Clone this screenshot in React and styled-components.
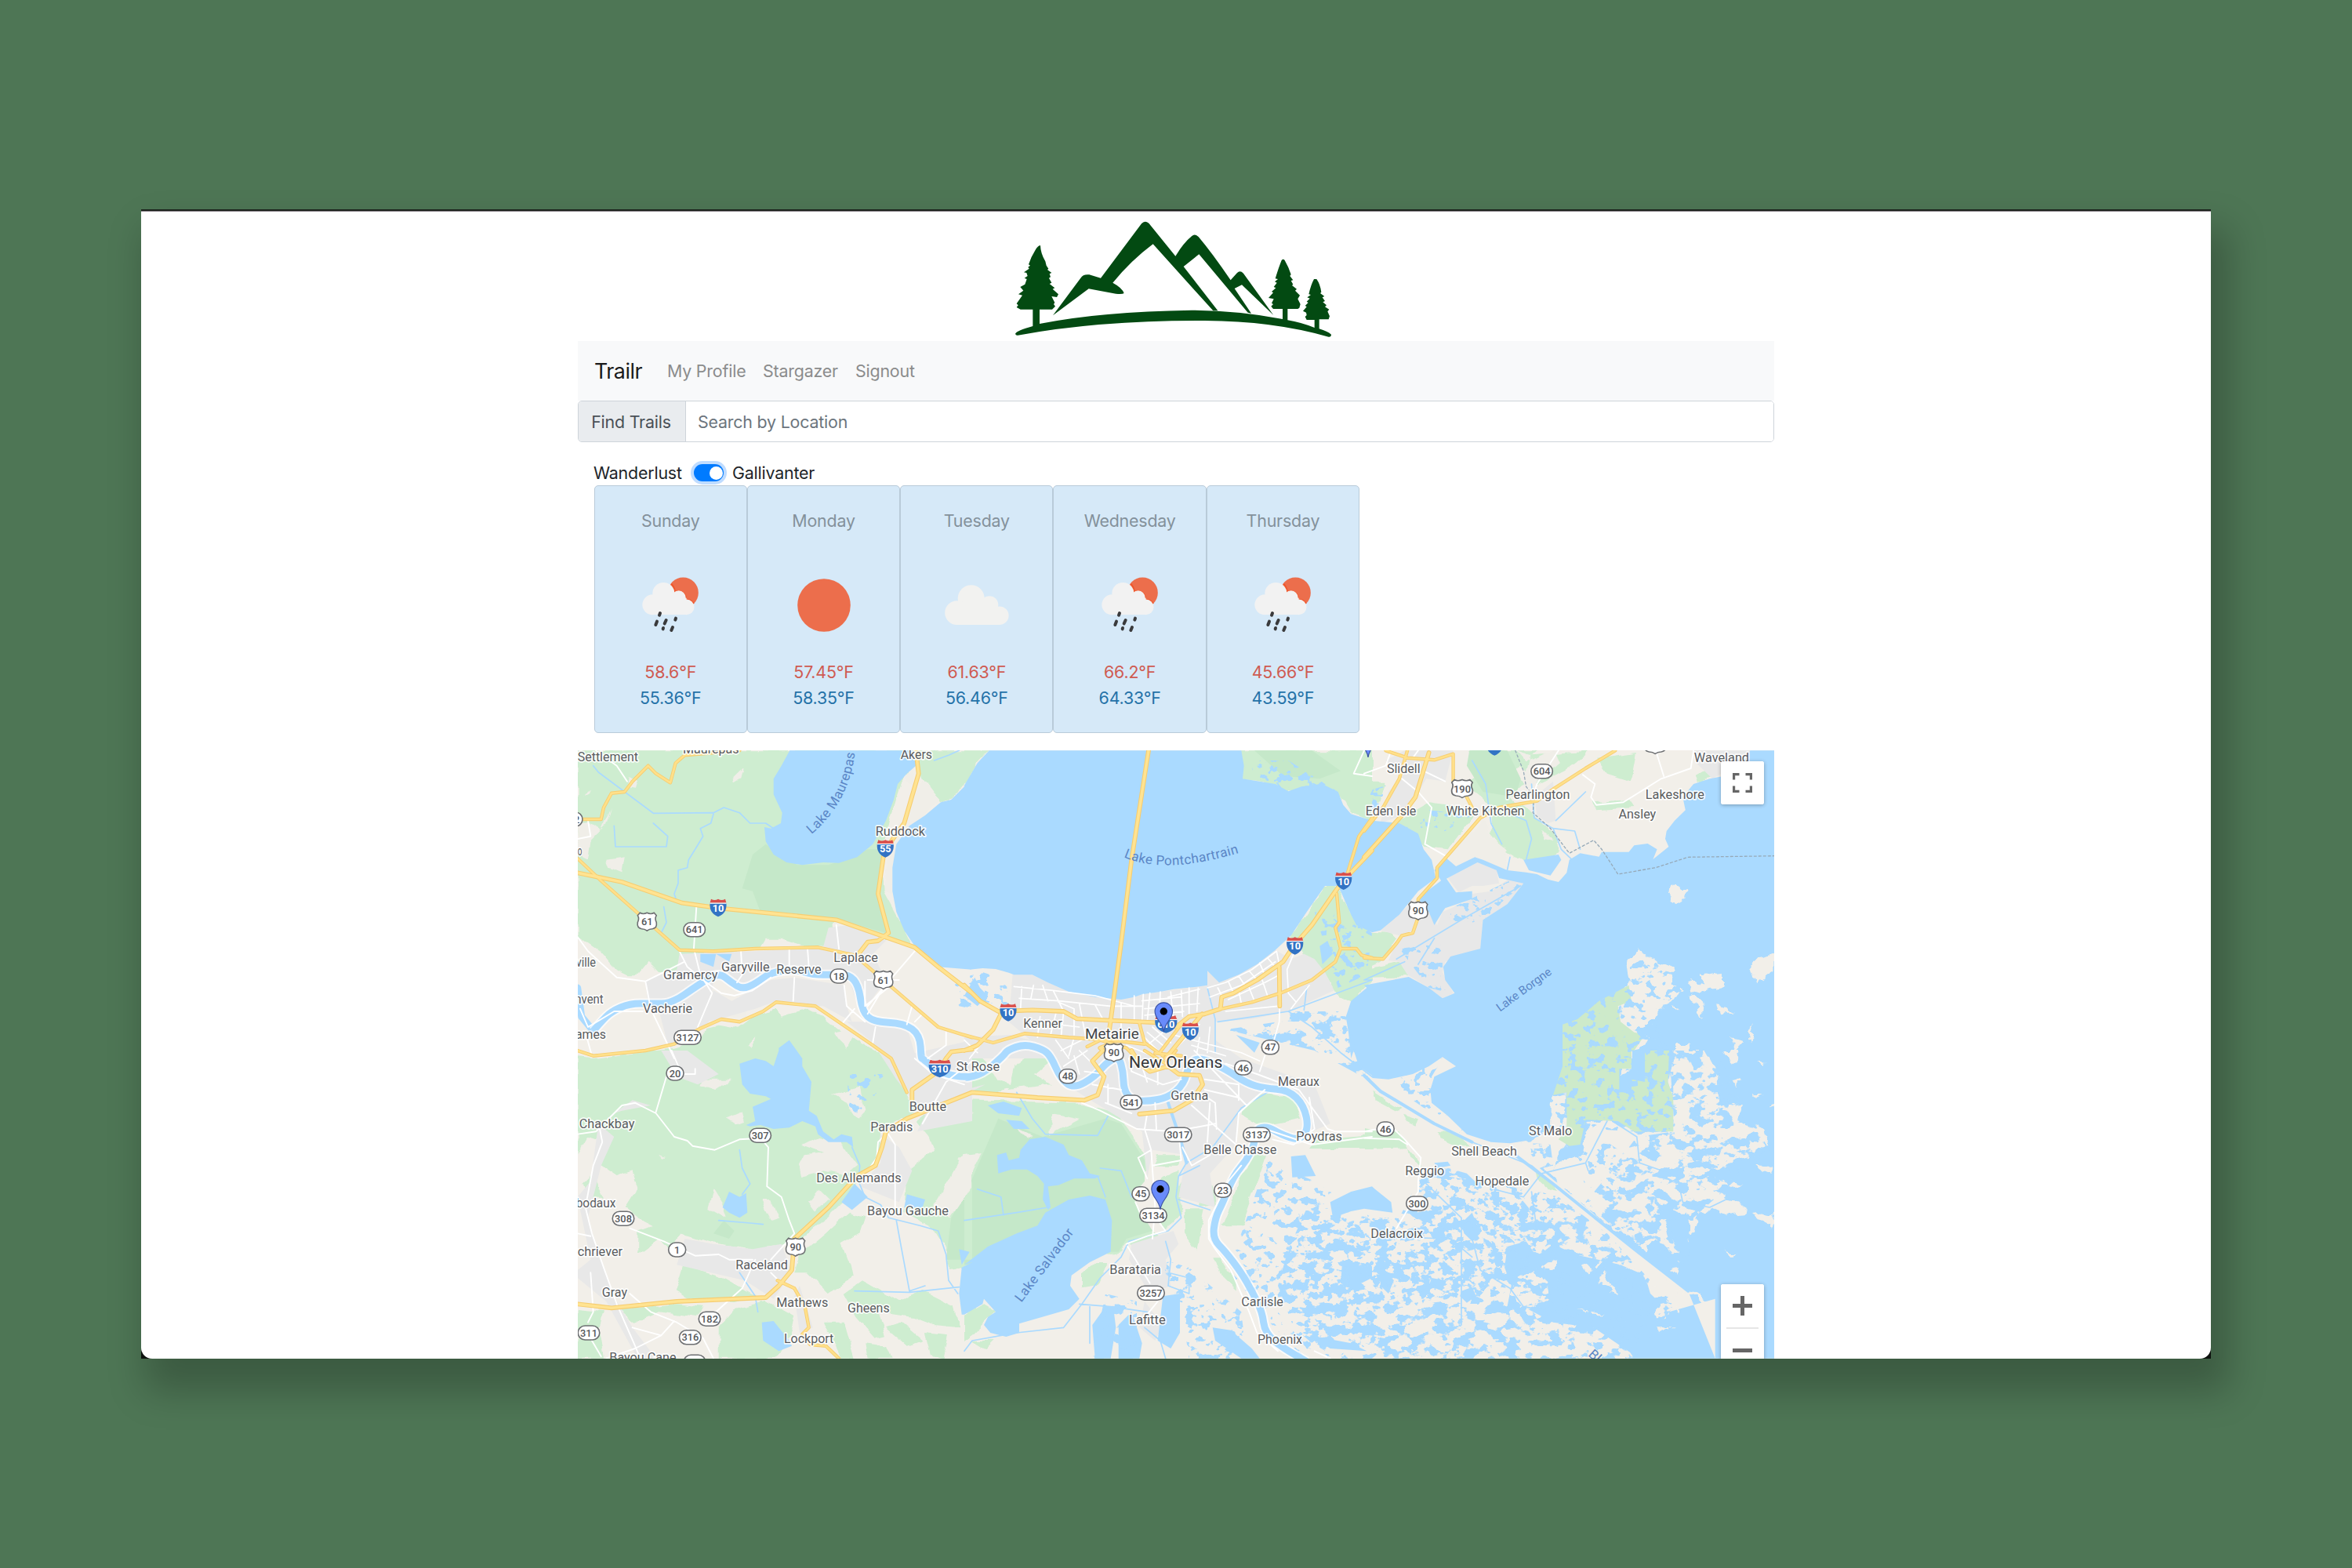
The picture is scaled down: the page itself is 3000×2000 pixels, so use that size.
import React from "react";
import styled, { createGlobalStyle } from "styled-components";

const GlobalStyle = createGlobalStyle`
  * { box-sizing: border-box; }
  body { margin: 0; background: #4e7655; font-family: Inter, "Liberation Sans", sans-serif; }
  button, input { font: inherit; letter-spacing: inherit; }
`;

/* ---------- page shell ---------- */

const Stage = styled.main`
  height: 2000px;
  padding: 267px 180px;
  background: #4e7655;
  overflow: hidden;
`;

const Shot = styled.div`
  height: 1466px;
  background: #0d120e;
  border-top: 2px solid #1c221d;
  box-shadow: 14px 33px 45px 9px rgba(0, 0, 0, 0.23);
`;

const Page = styled.div`
  height: 1464px;
  border-top: 1px solid #8d858d;
  border-radius: 0 0 14px 14px;
  background: #fff;
  overflow: hidden;
  font-size: 21.4px;
  line-height: 32px;
  letter-spacing: -0.2px;
  color: #212529;
`;

const Container = styled.div`
  width: 1526px;
  margin: 0 auto;
  display: flex;
  flex-direction: column;
`;

const LogoRow = styled.header`
  height: 165px;
  display: flex;
  justify-content: center;
`;

const LogoArt = styled.svg`
  width: 450px;
  height: 165px;
  margin-right: 10px;
  fill: #034a12;
`;

const Navbar = styled.nav`
  display: flex;
  align-items: center;
  height: 76px;
  padding: 0 21px;
  background: #f8f9fa;
`;

const Brand = styled.a`
  width: 93px;
  font-size: 26.8px;
  letter-spacing: -0.5px;
  color: #1b1b1b;
`;

const NavLink = styled.a`
  width: ${(p) => p.$w}px;
  white-space: nowrap;
  color: #8b8c8c;
`;

const SearchGroup = styled.div`
  display: flex;
  height: 53px;
  border: 1.4px solid #ced4da;
  border-radius: 5px;
  overflow: hidden;
`;

const SearchButton = styled.button`
  width: 137px;
  border: 0;
  border-right: 1.4px solid #ced4da;
  padding: 0 2px 0 0;
  background: #e9ecef;
  color: #495057;
`;

const SearchInput = styled.input`
  flex: 1;
  border: 0;
  padding: 0 15px;
  outline: 0;
  &::placeholder { color: #6c757d; opacity: 1; }
`;

const Modes = styled.div`
  display: flex;
  align-items: center;
  height: 32px;
  margin: 23px 0 0 20px;
`;

const ModeName = styled.span`
  width: ${(p) => p.$w}px;
`;

const Switch = styled.span`
  display: flex;
  justify-content: flex-end;
  align-items: center;
  width: 38px;
  height: 22px;
  margin: 0 11px 0 0;
  padding: 0 1.5px;
  border-radius: 11px;
  background: #007bff;
  box-shadow: 0 0 0 4px #bfdcff;
`;

const Knob = styled.span`
  width: 17px;
  height: 17px;
  border-radius: 50%;
  background: #fff;
`;

/* ---------- forecast ---------- */

const Forecast = styled.section`
  display: flex;
  margin: 0 0 22px 20.6px;
  height: 316px;
`;

const DayCard = styled.article`
  display: flex;
  flex-direction: column;
  align-items: center;
  width: 195.3px;
  padding-top: 28px;
  border: 1.6px solid #b9cbd9;
  border-radius: 5px;
  background: #d6e9f8;
`;

const DayName = styled.h2`
  margin: 0;
  font-size: inherit;
  font-weight: 400;
  color: #84919b;
`;

const IconBox = styled.div`
  display: flex;
  align-items: center;
  justify-content: center;
  height: 161px;
  padding-top: 22px;
`;

const Temp = styled.span`
  line-height: 33px;
  color: ${(p) => (p.$high ? "#cf5b52" : "#2472a8")};
`;

const RainIcon = () => (
  <svg width="80" height="76.7" viewBox="303 401 240 230">
    <circle cx="472" cy="470" r="58.5" fill="#ec6e4c" />
    <path d="M427 436a52 52 0 0 1 14 30a30 30 0 0 1 42 30a34 34 0 0 1 30 16" fill="none" stroke="#f0562a" strokeWidth="5" />
    <g fill="#f2f2f2">
      <circle cx="397" cy="473" r="42" />
      <circle cx="355" cy="516" r="39" />
      <circle cx="455" cy="489" r="27" />
      <circle cx="485" cy="525" r="29.5" />
      <rect x="355" y="490" width="130" height="64" />
    </g>
    <path d="M384 548l-3 8M372 580l-5 13M407 575l-6 13M444 568l-2 6M396 605l-1 4M432 602l-5 12" stroke="#3a3a3c" strokeWidth="12" strokeLinecap="round" />
  </svg>
);

const SunIcon = () => (
  <svg width="68" height="68" viewBox="0 0 68 68">
    <circle cx="34" cy="34" r="33.8" fill="#ec6e4c" />
  </svg>
);

const CloudIcon = () => (
  <svg width="82" height="51" viewBox="0 0 82 51" fill="#f2f2f0">
    <circle cx="33.7" cy="17.2" r="17" />
    <circle cx="15.6" cy="35.6" r="15.4" />
    <circle cx="57" cy="25.5" r="11.3" />
    <circle cx="69.8" cy="39.2" r="11.8" />
    <path d="M15.6 22h43v8l11 6v15h-54z" />
  </svg>
);

const icons = { rain: RainIcon, sun: SunIcon, cloud: CloudIcon };

const days = [
  { name: "Sunday", icon: "rain", high: "58.6", low: "55.36" },
  { name: "Monday", icon: "sun", high: "57.45", low: "58.35" },
  { name: "Tuesday", icon: "cloud", high: "61.63", low: "56.46" },
  { name: "Wednesday", icon: "rain", high: "66.2", low: "64.33" },
  { name: "Thursday", icon: "rain", high: "45.66", low: "43.59" },
];

/* ---------- map ---------- */

const MapFrame = styled.section`
  position: relative;
  height: 776px;
  background: #aadaff;
  overflow: hidden;
`;

const MapArt = styled.svg`
  display: block;
  width: 1526px;
  height: 776px;
  font-family: Roboto, "Liberation Sans", sans-serif;
  letter-spacing: 0;
`;

const MapButton = styled.button`
  display: flex;
  align-items: center;
  justify-content: center;
  width: 55px;
  height: 55px;
  padding: 0;
  border: 0;
  background: #fff;
`;

const Control = styled.div`
  position: absolute;
  top: ${(p) => p.$top}px;
  right: 13.5px;
  width: 55px;
  border-radius: 3px;
  background: #fff;
  box-shadow: 0 1px 5px rgba(0, 0, 0, 0.3);
  overflow: hidden;
`;

const Divider = styled.div`
  height: 1.5px;
  margin: 0 7px;
  background: #e6e6e6;
`;

/* The survey is divided into six sheets, three across and two down, each
   drawn in its own units: [left, top, unit width, unit height]. */
const sheets = {
  A: [730, 950, 1 / 3, 1 / 3],
  B: [1230, 950, 1 / 3, 1 / 3],
  C: [1740, 950, 1 / 2.904, 1 / 3],
  D: [730, 1340, 1 / 3, 1 / 3],
  E: [1230, 1340, 1 / 3, 1 / 3],
  F: [1740, 1340, 1 / 2.904, 1 / 3],
};

const place = (sheet, x, y) => {
  const [l, t, sx, sy] = sheets[sheet];
  return [+(l + x * sx - 737).toFixed(1), +(t + y * sy - 957).toFixed(1)];
};

const points = (text) => {
  let sheet = "A";
  const out = [];
  const parts = text.trim().split(/\s+/);
  for (let i = 0; i < parts.length; ) {
    if (sheets[parts[i]]) sheet = parts[i++];
    else {
      out.push(place(sheet, +parts[i], +parts[i + 1]));
      i += 2;
    }
  }
  return out;
};

const outline = (list, end = "") => list.map((s) => "M" + points(s).join("L") + end).join("");

const curve = (text) => {
  const p = points(text);
  let d = "M" + p[0];
  for (let i = 1; i < p.length - 1; i++) {
    const mid = [(p[i][0] + p[i + 1][0]) / 2, (p[i][1] + p[i + 1][1]) / 2];
    d += "Q" + p[i] + " " + (i === p.length - 2 ? p[i + 1] : mid);
  }
  return d;
};

const Area = ({ shapes, ...rest }) => <path d={outline(shapes, "Z")} {...rest} />;
const Lines = ({ shapes, ...rest }) => (
  <path d={outline(shapes)} fill="none" strokeLinejoin="round" strokeLinecap="round" {...rest} />
);

const green = [
  "A 20 22 1340 22 1260 140 1240 200 1180 400 1190 560 1250 670 1300 770 1220 750 1140 730 1080 690 1000 680 1010 740 960 770 880 765 800 740 740 740 720 775 650 790 480 800 440 840 400 870 330 870 290 830 250 880 210 880 150 850 100 790 20 735",
  "A 1310 22 1530 22 B 95 22 50 70 0 155 A 1480 190 1410 220 1340 130",
  "A 20 1195 80 1200 370 1165 480 1130 520 1080 560 1070 640 1085 700 1040 780 1010 800 1040 900 1010 960 1040 1010 1080 1080 1130 1200 1200 D 1230 60 1290 190 1320 230 1180 310 1170 420 1090 480 1060 560 980 640 900 700 840 740 690 760 540 740 440 710 350 690 250 640 200 600 250 520 230 460 170 480 80 420 120 350 60 330 20 400",
  "D 1310 270 1400 200 1530 170 E 0 190 450 200 560 230 620 290 690 390 690 500 640 560 720 700 620 740 600 770 560 780 400 700 0 830 D 1440 840 1430 760 1380 680 1270 620 1280 460 1380 380 1360 330",
  "D 870 780 1060 620 1120 640 1100 700 1030 740 1060 820 1070 870 980 930 900 850 850 850",
  "D 420 820 560 860 700 940 620 960 440 950 390 920",
  "D 560 1060 620 990 740 960 850 1020 830 1090 780 1178 560 1178",
  "D 180 990 400 970 500 980 480 1020 330 1000 240 1040",
  "D 20 990 120 1000 100 1060 120 1178 20 1178",
  "D 1040 930 1110 880 1180 920 1250 960 1340 920 1460 980 1480 1060 1380 1050 1300 1020 1170 1000 1200 1090 1160 1100 1090 1020",
  "D 960 1040 1040 1040 1080 1178 1030 1178",
  "D 1200 1060 1260 1040 1340 1110 1280 1130", "D 1350 1080 1440 1090 1420 1178 1370 1160", "D 1120 1120 1200 1130 1220 1178 1130 1178",
  "D 40 510 80 470 120 560 60 560", "D 250 690 330 660 380 640 410 700 380 760 330 720 250 780",
  "E 0 0 60 20 100 60 130 110 190 140 60 170 0 150", "E 190 60 280 0 330 40 270 90 330 130 170 150",
  "B 1060 22 1560 22 1560 290 1480 265 1430 180 1240 178 1130 140 1065 130",
  "B 1250 730 1380 540 1420 540 1440 560 1480 650 1560 720 1560 900 1480 985 1430 960 1390 890 1300 800",
  "C 0 715 100 720 120 740 60 830 0 860", "C 0 860 130 830 165 885 30 890 0 920",
  "C 380 22 640 22 560 100 590 150 540 200 620 260 700 340 730 410 600 450 520 400 470 340 470 250 430 200 370 150 440 100",
  "C 0 140 80 140 60 220 0 230", "C 120 290 240 220 420 250 310 400 220 390", "C 620 40 840 22 740 100 640 150 570 70",
  "C 860 50 1010 30 990 140 900 110", "C 1230 120 1280 90 1300 120 1240 140", "C 850 220 980 210 1000 240 860 250",
  "E 1080 200 1140 160 1260 180 1290 260 1130 290 1060 250", "E 1350 340 1560 320 1560 378 1320 378",
  "F 0 300 40 310 130 310 160 370 0 375", "F 30 155 135 225 120 235 40 190", "F 140 245 200 265 190 290 150 270",
  "F 275 315 330 320 390 370 350 370 280 340", "F 160 370 210 430 215 445 170 410",
  "E 1110 400 1155 400 1120 500 1060 670 985 670 1040 540 1060 480", "E 740 400 830 400 810 440 720 440",
  "E 760 480 820 460 830 630 770 680 740 640", "E 820 530 900 430 1000 400 900 480 870 540", "E 890 520 950 520 960 590 900 600",
  "E 840 610 920 610 900 700 890 770 840 700", "E 450 850 500 810 550 810 510 900 450 910", "E 620 730 720 690 760 720 660 750",
  "E 0 1010 70 970 120 1000 40 1080 0 1110", "E 955 790 980 790 1000 830 1040 880 1040 920 990 870", "E 30 1110 110 1110 80 1140",
  "F 635 465 700 500 720 540 680 530 640 490",
];

const deepGreen = [
  "A 740 380 860 460 980 460 1070 430 1130 400 1190 400 1170 560 1200 650 1200 720 1020 670 720 640 690 560 650 550 690 420",
  "E 130 260 300 330 540 260 600 280 690 420 690 500 640 560 720 690 620 720 590 770 560 770 0 820 0 560",
  "D 1530 500 1450 640 1430 800 1530 800", "C 390 22 530 22 580 130 560 200 440 180 380 80", "D 540 700 580 650 620 690 600 720",
  "B 1110 22 1330 22 1440 100 1360 130 1220 120",
];

const farmland = [
  "A 20 300 60 290 110 330 150 240 130 310 70 370 60 440 20 420", "A 130 440 200 430 190 490 140 470", "A 215 130 250 135 240 170 210 165",
  "A 610 130 650 90 640 130 615 145", "A 40 200 70 170 60 195", "A 1280 110 1315 80 1310 150 1275 140", "A 1340 135 1410 220 1290 310 1245 380 1230 480 1220 570 1190 560 1200 480 1230 330 1280 260",
  "D 940 330 1030 350 1060 400 1090 440 1040 480 960 460 880 480 870 440 890 400 960 390 880 360", "D 500 110 610 110 550 150 490 130", "D 590 260 650 235 660 270 620 280",
  "D 990 170 1100 140 1120 230 1090 260 1050 200", "D 900 580 940 530 980 570 930 620", "D 720 570 760 570 790 640 760 650", "D 540 530 570 580 590 640 520 600", "D 330 395 360 405 350 410",
  "D 1270 110 1370 60 1400 90 1310 150", "A 580 990 650 970 660 1040 580 1045", "A 1000 1100 1090 1080 1050 1160 1020 1130", "A 670 1150 700 1120 690 1160",
  "E 200 300 260 330 240 340", "E 340 240 440 260 330 320", "E 0 210 30 240 0 270", "D 1480 410 1530 400 1530 520 1450 640 1380 600 1450 480", "E 0 400 65 390 0 530",
  "C 410 330 440 270 470 350 530 400 520 480 430 440 340 465 300 430", "C 660 330 700 370 660 360",
  "C 560 22 600 70 700 22 720 70 640 140 590 170 620 40",
];

const urban = [
  "A 410 800 700 790 960 775 980 700 1060 690 1160 720 1200 750 1150 800 1200 900 1120 1010 1100 1020 1060 900 1000 880 870 870 760 880 650 940 590 900 540 900 520 1070 440 1110 370 1165 330 1010 290 1000 280 900 400 860",
  "A 540 940 610 980 760 900 850 890 1040 920 1050 1000 1070 1060 960 1000 920 1000 780 980 700 1010 560 1050 510 1060",
  "A 1050 1060 1130 1060 1280 1080 1310 1180 1530 1130 1530 1200 D 1530 270 1320 310 1350 250 1240 110 A 1150 1140",
  "B 185 875 260 880 320 910 400 945 500 965 600 975 680 955 750 945 900 925 930 865 975 910 1050 880 1190 785 1250 820 1300 800 1340 820 1380 870 1415 940 1240 1020 1100 1050 960 1060 960 1130 1060 1200 E 1340 130 1400 280 1330 310 1320 200 1150 150 1050 240 1040 360 940 470 960 600 820 560 850 400 720 380 700 490 690 400 680 310 500 200 420 150 300 0 B 170 1060",
  "B 0 1120 170 1110 300 1140 330 1200 0 1200", "C 80 60 150 22 330 22 300 140 230 130 180 220 140 270 60 300 90 180 150 110",
  "C 630 200 700 140 710 290 680 300 640 270", "C 1220 22 1430 22 1410 60 1290 130 1230 70",
  "D 430 720 540 740 690 760 800 740 840 850 770 950 660 880 400 820", "D 100 280 160 330 110 440 60 640 100 780 170 960 230 1060 320 1178 250 1178 130 960 20 870 20 840 70 800 20 560 70 500",
  "D 340 0 440 0 560 90 480 130 400 100", "D 1180 320 1250 370 1300 460 1250 580 1100 520 1180 430", "D 160 240 230 190 300 210 190 230",
  "D 870 900 920 1060 870 1080 850 940", "E 0 150 80 130 0 170", "E 640 740 800 690 820 740 770 800 790 900 710 930 630 800", "E 690 960 720 1000 760 1050 730 1110 670 1060",
  "C 60 710 170 610 240 620 270 690 290 640 400 590 400 570 470 560 540 510 590 530 530 610 440 670 430 780 300 830 290 870 330 950 290 970 240 930 160 880 130 830 90 825 130 730",
  "C 310 510 420 450 490 480 500 530 440 540 400 540 350 565",
];

const lakes = [
  "A 832 22 800 80 770 130 770 190 803 260 798 300 760 320 735 315 740 370 770 420 820 450 880 460 960 450 1020 452 1090 430 1150 380 1200 290 1230 210 1245 150 1280 110 1315 80 1315 22",
  "B 95 22 50 70 0 155 A 1500 160 1450 210 1410 220 1350 270 1290 310 1240 380 1225 470 1225 560 1240 640 1270 710 1310 770 1400 850 1530 860 B 20 860 70 855 120 858 170 872 190 880 260 880 320 910 400 945 500 965 600 975 650 965 680 955 750 945 800 935 900 925 930 920 930 865 975 910 1050 880 1120 840 1190 785 1250 730 1310 640 1380 540 1420 540 1440 560 1480 650 1500 690 1560 718 C 60 710 130 650 200 560 265 510 250 440 220 400 200 340 130 300 30 290 B 1480 265 1450 230 1430 180 1370 150 1290 160 1240 178 1190 150 1130 140 1065 130 1070 80 1060 22",
  "C 1520 22 1430 22 1410 60 1330 120 1280 130 1220 150 1180 200 1190 250 1150 290 1120 330 1115 360 1128 390 1070 438 1085 400 1050 378 1000 385 980 410 880 410 870 428 800 415 760 440 750 490 720 525 680 515 640 495 600 488 530 480 440 440 410 430 340 465 300 430 260 480 285 520 220 570 200 600 240 640 260 690 290 640 300 625 400 590 400 560 340 565 305 512 420 450 490 480 500 510 590 530 530 610 440 670 430 780 320 810 293 850 300 900 335 950 290 970 240 930 165 888 0 920 B 1540 930 1480 980 1460 1040 1470 1100 1480 1200 E 1490 0 1510 60 1560 95 F 30 105 90 110 180 90 240 60 290 25 340 60 260 100 245 150 250 200 310 250 380 320 470 350 540 355 600 345 720 420 650 450 800 580 1000 760 1200 920 1300 1178 1520 1178",
  "F 530 750 600 730 640 790 700 740 780 780 950 820 1040 860 1060 930 1130 1000 1300 950 1300 1178 1000 1178 985 1155 850 1060 700 1040 590 980 530 980 545 900 520 830",
  "D 640 50 700 30 740 40 770 60 790 0 A 790 1160 830 1130 880 1200 D 880 60 915 120 905 230 935 250 960 310 1000 340 1030 320 1070 330 1075 370 1050 350 980 350 940 320 930 290 880 270 830 295 770 300 720 285 680 290 665 285 700 270 690 215 760 185 740 175 680 165 650 130",
  "E 215 380 250 340 310 330 380 360 400 400 450 420 480 470 520 480 500 490 420 490 360 515 320 520 330 600 320 610 300 570 305 510 280 480 240 455 180 455 130 470 125 400 160 390 170 420 210 410",
  "E 540 570 565 650 560 770 480 810 410 860 405 900 440 950 400 990 330 1010 210 1045 210 1080 160 1095 100 1080 75 1050 90 1020 120 1000 75 950 70 970 0 1010 D 1490 1010 1480 930 1490 830 1530 810 E 0 820 90 750 200 700 280 670 310 620 400 570 480 555",
  "D 575 600 600 540 640 560 665 545 670 620 640 640 600 620", "D 725 1040 770 1035 830 1110 840 1130 790 1150 730 1110", "D 1030 580 1080 510 1130 560 1070 610",
  "D 1270 600 1280 550 1350 570 1340 600", "D 1480 760 1520 770 1490 820", "E 90 210 150 195 220 220 210 250 130 240", "E 160 265 220 270 250 300 190 300",
  "E 1250 405 1305 400 1345 480 1255 485", "E 1400 580 1480 540 1560 520 F 40 530 100 580 105 620 0 605 E 1480 615 1410 640", "E 1445 825 1560 825 1560 870 1480 910 1440 890",
  "E 760 940 825 930 825 1080 790 1140 740 1110", "E 490 1050 540 980 570 980 580 1060 560 1178 500 1178", "E 590 1050 640 1000 680 1120 670 1178 590 1178", "E 950 1060 1020 1070 1100 1140 1130 1178 1060 1178 960 1110",
  "E 1320 1090 1480 1120 1540 1150 1400 1140", "F 360 920 400 905 415 940 380 965 355 940", "B 1360 770 1390 750 1410 800 1370 840", "B 1040 1110 1130 1140 1110 1178", "A 490 800 550 800 540 850 490 830", "A 550 800 610 800 600 830",
  "B 0 960 40 890 60 930 90 960 50 1000", "F 260 430 310 425 320 440 270 450",
  "F 360 660 400 620 430 700 400 730 370 700", "F 470 540 500 540 500 600 480 590", "F 60 820 110 880 90 930 60 900", "F 250 870 300 880 290 920 240 900",
  "C 590 440 720 420 730 440 690 500 610 480",
];

const outerLand = [
  "C 975 820 1010 775 1080 830 1150 860 1140 920 1190 940 1110 990 1080 1060 1000 1100 1060 1120 1040 1160 990 1170 F 990 80 940 90 945 0 C 960 1150 930 1000 985 900",
  "F 660 450 800 410 830 270 900 260 1010 320 1140 310 1150 180 1130 120 1150 0 1260 0 1310 90 1320 220 1400 200 1380 260 1480 300 1500 370 1340 440 1200 480 1410 510 1300 530 1400 590 1410 620 1350 630 1280 600 1240 640 1205 730 1200 620 1150 620 1060 560 1110 640 1140 730 1175 810 1080 720 1040 770 1000 720 900 660 780 560",
  "F 695 170 750 160 750 360 690 450 600 400 590 360 690 310", "F 770 600 1130 880 1280 960 1270 975 1150 900 1170 1000 1080 930 1040 860 900 780 760 660 700 560",
  "C 1125 590 1145 540 1170 550 1195 545 1190 580 1150 600", "C 1240 880 1330 870 1330 930 1210 950 1200 900 1260 920",
  "C 1430 840 1520 790 1520 860 1450 920", "C 1205 955 1240 970 1260 1040 1235 1030", "C 1310 1000 1380 1020 1320 1030", "C 1435 1065 1445 1120 1425 1130", "C 1350 1120 1400 1130 1370 1178", "C 1150 1140 1195 1140 1210 1200 1150 1200", "C 1130 1000 1165 1005 1150 1010",
  "F 1340 0 1390 0 1360 50", "F 1370 120 1390 110 1385 150", "F 1450 165 1480 165 1450 180", "F 1490 215 1520 185 1520 200", "F 1465 40 1490 45 1480 60", "F 1440 630 1520 620 1520 690",
  "F 1445 440 1500 440 1510 480 1460 460", "F 1340 755 1395 775 1370 780", "F 1070 980 1130 950 1120 1030 1080 1030", "F 1080 1060 1150 1060 1100 1080", "F 1140 830 1170 825 1160 860",
  "F 890 840 940 940 870 910", "F 790 990 920 1015 850 1010", "F 560 880 640 840 680 910 690 960 600 990 540 940", "F 800 830 890 800 820 850", "F 700 790 715 800 690 840 640 840",
];

const reserve = [
  "C 735 1070 790 1050 870 980 980 920 990 980 940 1000 950 1060 1000 1100 1040 1110 1000 1170 F 990 0 990 70 945 70 945 160 990 160 990 110 1040 120 1040 0 1130 0 1125 120 1145 180 1145 310 1000 310 940 270 820 265 800 360 760 365 720 340 750 300 750 160 700 170 735 60",
];

const marsh = [
  "E 1240 760 1330 560 1440 640 1560 640 F 130 640 200 500 280 440 380 470 440 530 560 540 640 640 720 560 900 700 1060 880 1160 960 1000 1178 E 1400 1178 1260 1060 1200 900",
  "F 580 350 690 360 700 440 660 450", "F 1010 330 1150 310 1130 0 1300 0 1500 380 1220 640 1200 820 1000 750 820 580 900 480",
  "E 540 930 660 960 660 1178 490 1178",
  "B 1000 1090 1200 1060 1250 1020 1470 1020 1500 1200 E 1560 120 1450 60 1340 0",
];

const marshFine = [
  "E 1160 420 1340 500 1560 640 F 200 640 300 480 650 540 720 560 820 640 600 900 E 1560 1000 1300 1178 1130 1000 1010 840 1060 700",
  "C 735 1070 870 980 980 920 F 1145 0 1145 310 1000 310 700 290", "B 1080 60 1240 60 1430 180 1240 178 1130 140", "B 1340 640 1480 660 1560 720 1540 880 1430 930 1390 800",
  "C 975 820 1010 775 1150 860 1190 940 1110 990 1080 1060 990 1178", "C 290 640 540 520 580 540 440 670 320 700", "C 130 780 290 760 290 860 320 950 240 930",
  "C 0 180 100 150 60 290 0 240", "C 240 250 400 270 300 330 150 320", "B 0 870 70 870 160 900 170 1000 60 980", "A 1440 900 1530 890 1530 1010 1480 1000", "D 1050 90 1190 90 1180 140 1100 250 1060 220",
  "E 760 800 860 830 1060 1000 1080 1178 860 1178 830 980 780 900", "F 90 110 180 90 290 30 250 100 250 200 400 330 360 320 180 190", "F 780 400 900 350 1000 420 1150 500 1000 560 820 520",
];

const river =
  "A 80 1095 110 1060 150 1020 220 990 300 990 380 990 480 920 560 870 610 910 650 935 700 915 760 870 860 860 920 880 1000 880 1060 880 1095 920 1110 1020 1150 1060 1270 1065 1330 1110 1335 1200 D 1340 30 1400 80 1470 100 1530 100 E 0 105 70 90 150 20 B 165 1168 230 1145 300 1165 E 330 20 370 110 420 145 500 100 540 50 590 20 608 80 610 150 640 190 700 195 780 180 840 130 860 50 900 25 1000 70 1080 125 1150 145 1240 150 1300 210 1318 300 1280 345 1210 320 1160 290 1115 300 1110 360 1080 420 1030 480 990 580 960 640 950 720 1000 770 1060 850 1100 920 1140 1000 1150 1080 1220 1140 1310 1190";

const creeks = [
  "A 80 80 100 105 310 262 540 260 580 240 640 260 680 300 740 300 770 320", "A 540 265 530 300 490 320 500 350 470 400 445 440 440 470 405 480 405 530 390 570 400 600",
  "A 160 310 165 390 360 390 365 350 310 300", "A 350 620 360 680 340 720", "A 1385 60 1440 40 1480 22", "D 1070 370 1100 440 1095 500 1120 560 1180 590 1210 640 1330 670 1400 690 1430 780 1440 880 1475 930",
  "D 1240 650 1260 760 1290 920 1350 900", "D 640 380 650 450 680 510 650 550", "D 560 650 680 660 730 665", "D 1080 920 1290 925 1480 905", "D 640 850 700 940 710 1000",
  "E 200 160 260 260 310 320 510 325 550 250", "E 510 480 540 560", "E 520 450 600 460 640 560", "E 780 200 830 350 850 430 820 480 810 560 830 640 780 690 630 730 600 790 520 870 450 970 380 1060 200 1080 30 1110 0 1150",
  "E 850 430 950 370 1060 220 1160 160", "E 820 480 900 440", "E 770 730 790 800 780 900 860 930 860 870 780 850", "E 690 1060 750 1110 770 1178", "E 820 570 940 610", "E 440 970 560 980 700 1000", "E 480 980 480 1120", "E 50 530 140 560 150 630", "E 0 650 200 620 320 600",
  "B 930 930 960 1050 960 1178", "B 970 1060 1110 1040 1240 1020 1400 960 1560 900 C 0 900 150 830", "B 1240 1020 1330 1080 1440 1178 E 1560 100", "B 1300 1015 1310 930",
  "F 0 100 60 160 260 280 400 350 620 440 700 510 1200 920", "C 120 820 360 670 580 540", "C 200 840 260 740", "C 710 290 760 240 820 180", "C 620 150 630 280 700 320 730 400 770 440", "C 700 320 780 330 800 400", "C 510 250 600 290 620 360 600 440", "C 400 60 450 150 470 300 510 380", "C 540 430 530 480",
  "F 830 460 820 430 900 270", "F 1020 430 1160 480 1180 580 1280 600 1340 570", "F 660 470 820 430", "F 1020 430 1010 330 920 270", "F 400 720 430 840 540 910 590 980 700 1000 780 1050", "F 150 715 320 720 400 790", "F 220 500 360 640 360 1050", "F 480 530 590 560 650 480", "F 620 540 640 690",
];

const dualRoads = [
  "A 20 490 190 525 420 605 560 625 1010 670 1310 775 1400 850 1530 950 B 0 920 60 980 130 1020 260 1015 380 1020 430 1048 560 1055 740 1063 810 1080 860 1040 920 1030 980 1010 985 965 1030 950 1120 900 1220 830 1260 770 1330 690 1420 560 1450 520 1560 405 C 0 430 140 270 190 200 240 30",
  "A 1315 22 1325 110 1270 300 1220 370 1190 430 1180 500 1170 570 1210 720 1170 750 1130 755 1080 820",
  "B 705 22 640 440 600 760 560 1055 555 1090", "A 1530 1165 1450 1175 1430 1200 D 1400 80 1300 150 1300 190", "B 140 1030 110 1090 50 1150 0 1170",
  "D 20 970 150 985 400 960 740 945 790 900 840 840 850 720 980 600 1090 480 1160 440 1185 370 1200 310 1280 260 1530 160 E 30 160 280 180 460 190 510 170 535 100 490 40 530 0 B 520 1160 560 1145",
  "E 640 0 670 50 710 80 780 60 820 90 900 95 912 130 870 190 800 230 670 243", "B 910 1030 860 1090 770 1200", "B 1205 850 1207 1000",
];

const roads = [
  "A 20 435 110 520 410 785 540 790 700 780 940 775 1010 790 1080 805 1190 900 1400 1080 1530 1120", "B 0 1110 110 1140 230 1105 400 1120 560 1130 690 1145",
  "A 20 1170 80 1190 280 1170 390 1145 490 1085 570 1050 640 1060 730 1020 780 985 930 1000 1150 1150 1220 1200 D 1220 30 1280 160",
  "B 670 1065 690 1140 760 1190", "B 830 1070 750 1175", "B 470 1155 520 1130 620 1160 650 1190", "E 690 0 770 50 810 0", "B 730 1180 830 1190",
  "B 985 1010 1100 985 1210 950 1330 900 1420 830 1440 780 1500 780 1520 805 1560 815 C 0 815 70 820 120 760 140 730 180 720 200 660 200 590 270 510 270 470 430 280 500 240 640 215 700 170 820 90 930 22",
  "B 1425 570 1435 680 1420 700 1440 780", "B 1465 495 1510 350 1560 280", "C 0 330 70 240 130 130 160 22", "C 80 22 160 50 260 58 330 35 330 140", "C 380 200 400 240",
  "A 35 285 110 285 120 240 150 185 200 180 230 140 290 80 320 110 375 145 395 70 430 40 640 22", "D 785 880 850 910 890 980 905 1060 880 1085 910 1125 970 1130 1020 1178",
];

const streets = [
  "A 475 620 465 780 490 880 535 950 480 1080", "A 20 735 60 790 170 890 280 905 430 830", "A 280 905 300 1010 390 1200 D 380 0 410 70", "A 410 790 440 850 500 900 570 950 620 960 690 940 760 890", "A 1010 690 1020 780", "A 645 785 650 880 630 910", "A 830 780 830 860", "A 900 780 905 850",
  "A 30 1010 60 1080 160 1020 270 1020", "A 850 890 845 980", "A 1040 920 1050 1000 1120 1060", "A 1120 905 1120 1000 1220 920", "A 1080 1010 1030 1070", "A 1300 1000 1280 1070", "A 1160 1080 1150 1140", "A 1430 1100 1430 1150 1360 1200", "A 1130 1030 1190 930", "A 1250 900 1130 900", "A 1310 790 1130 1000", "A 1310 1060 1340 1030",
  "D 20 320 90 310 190 210 240 200 320 240 390 330 440 345 460 365 545 380 640 340 720 335 750 370 745 520 800 560 830 650 850 700 760 800", "D 360 100 320 235", "D 105 300 115 350 80 440 50 600 75 700 120 830 170 970 240 1130 260 1178", "D 220 680 350 730 470 785 560 780 600 800 690 800", "D 760 850 790 880", "D 700 800 650 910 550 1000", "D 220 930 300 1000 400 1040 500 1100 540 1178", "D 20 700 70 710", "D 390 1035 340 1090 240 1140 130 1178", "D 70 850 80 1000 60 1040", "D 230 1060 340 1090", "D 75 1110 110 1170",
  "D 1200 320 1170 350 1165 410 1130 460", "D 1210 320 1235 360 1235 610", "D 1340 280 1430 120 1530 40", "D 1310 30 1380 90 1500 130",
  "D 430 90 470 90 470 70", "A 90 22 170 80 210 140", "A 60 290 70 350 20 360", "A 50 1100 75 1190",
  "E 450 200 520 230 660 300 800 310 960 280", "E 540 200 640 240", "E 690 300 715 380 665 410 700 490", "E 715 380 730 600 720 720", "E 655 580 680 640", "E 620 740 700 710 770 690 740 650", "E 625 750 710 890", "E 740 960 700 1010", "E 870 210 1040 360", "E 940 200 930 350", "E 700 240 690 300", "E 820 310 830 420 720 440", "E 835 370 870 440 940 400", "E 880 0 1080 210 1150 150 1050 240 1040 350", "E 1000 50 1120 90 1280 150 1390 300 1420 310 1560 310 F 0 310 100 290 150 340 210 410 200 500 200 540 120 680", "F 0 335 130 340 160 360", "E 1150 300 1330 360 1560 330",
  "E 1320 180 1340 300 1260 360 1180 340", "E 1060 440 1010 500 935 650 935 720 960 760 1020 840 1090 1000 1120 1080 1200 1150", "E 1340 1150 1400 1178", "E 1130 80 1150 20",
  "E 630 30 640 80 760 130 830 110", "E 680 60 700 120", "E 740 80 740 130", "E 900 160 960 200 965 300", "E 920 110 1050 130 1050 190", "E 920 150 1050 180", "E 730 200 735 300", "E 550 130 550 200", "E 490 130 600 150",
  "C 100 22 80 80 0 110", "C 140 130 200 180 250 240 225 380 310 430", "C 220 100 300 140", "C 720 22 640 150 630 180", "C 810 115 855 150 840 200 860 230 960 220 1100 130 1210 90 1220 22", "C 1080 22 1110 120", "B 1530 22 1490 110 1560 120", "C 180 50 200 22",
];

/* Surface streets of the city, laid out as two bent grids. */
const grid = [
  "B 190 925 340 940 500 960 650 1000", "B 210 970 360 980 560 1000 680 1000", "B 220 925 215 1010", "B 265 920 255 970", "B 300 920 320 980", "B 340 940 380 1020", "B 360 985 420 1010 420 1110", "B 440 990 465 1120", "B 500 995 530 1050",
  "B 270 1060 440 1080", "B 280 1120 290 1040", "B 330 1110 350 1030", "B 380 1020 370 1120", "B 600 990 600 1110", "B 650 960 650 1055", "B 685 955 680 1060", "B 710 950 700 1060", "B 750 945 745 1060", "B 790 945 800 1060", "B 830 940 835 1040", "B 860 930 860 1040", "B 895 930 890 1020", "B 690 1010 900 990", "B 680 980 830 965", "B 690 1035 840 1020", "B 780 965 900 935",
  "B 930 930 1000 910 1100 860 1195 790 1207 850", "B 940 965 1060 920 1190 830", "B 970 930 985 960", "B 1010 905 1030 950", "B 1050 885 1080 930", "B 1090 865 1120 900", "B 1130 835 1150 880", "B 1160 815 1190 850", "B 1010 975 1150 910 1207 880", "B 1050 940 1060 990", "B 1090 930 1110 980", "B 1140 900 1160 960", "B 1000 1020 1200 1000", "B 1260 800 1235 860 1240 950 1270 985", "B 1250 1010 1320 920", "B 1207 1000 1205 1060 1185 1130",
  "B 700 1100 760 1150", "B 720 1080 790 1140", "B 690 1120 740 1170", "B 800 1110 950 1150 1060 1178 E 1130 40", "B 870 1150 1000 1190", "B 900 1120 890 1178", "B 760 1100 700 1150", "B 790 1180 900 1070", "B 620 1150 720 1190", "B 940 1080 930 1178",
  "B 350 1130 400 1200", "B 370 1170 470 1120", "E 420 20 440 90", "E 380 60 470 0", "E 440 0 500 60", "E 460 80 540 90", "B 420 1120 400 1190",
  "B 0 1130 50 1178", "B 60 1150 20 1200",
];

const towns = [
  ["A", 20, 63, 252, "Settlement"], ["A", 423, 33, 638, "Maurepas"], ["A", 1256, 55, 1377, "Akers"], ["A", 1160, 348, 1350, "Ruddock"],
  ["A", 1000, 831, 1170, "Laplace"], ["A", 570, 868, 755, "Garyville"], ["A", 781, 876, 953, "Reserve"], ["A", 348, 898, 556, "Gramercy"],
  ["A", 270, 1025, 459, "Vacherie"], ["A", 20, 422, 37, "o"], ["A", 14, 848, 90, "ville"], ["A", 10, 991, 119, "nvent"], ["A", 12, 1125, 129, "ames"],
  ["B", 226, 1083, 375, "Kenner"], ["C", 84, 109, 208, "Slidell"], ["C", 5, 270, 193, "Eden Isle"], ["C", 304, 270, 594, "White Kitchen"],
  ["C", 524, 207, 762, "Pearlington"], ["C", 1042, 207, 1260, "Lakeshore"], ["C", 942, 283, 1081, "Ansley"], ["C", 1222, 66, 1426, "Waveland"],
  ["D", 26, 296, 238, "Chackbay"], ["D", 14, 601, 166, "bodaux"], ["D", 20, 787, 192, "chriever"], ["D", 113, 941, 210, "Gray"], ["D", 142, 1190, 398, "Bayou Cane"],
  ["D", 625, 837, 825, "Raceland"], ["D", 781, 982, 979, "Mathews"], ["D", 1053, 1003, 1214, "Gheens"], ["D", 810, 1118, 1000, "Lockport"],
  ["D", 1128, 630, 1440, "Bayou Gauche"], ["D", 934, 503, 1259, "Des Allemands"], ["D", 1141, 309, 1303, "Paradis"], ["D", 1289, 231, 1431, "Boutte"],
  ["D", 1469, 78, 1635, "St Rose"], ["E", 790, 190, 934, "Gretna"], ["E", 1200, 136, 1359, "Meraux"], ["E", 916, 395, 1195, "Belle Chasse"],
  ["E", 1270, 345, 1446, "Poydras"], ["E", 556, 854, 753, "Barataria"], ["E", 630, 1047, 770, "Lafitte"], ["E", 1060, 977, 1221, "Carlisle"], ["E", 1122, 1122, 1293, "Phoenix"],
  ["F", 24, 717, 218, "Delacroix"], ["F", 152, 478, 297, "Reggio"], ["F", 411, 515, 611, "Hopedale"], ["F", 323, 403, 566, "Shell Beach"], ["F", 610, 325, 770, "St Malo"],
];

const stateRoutes = [
  ["A", 467, 707, "641"], ["A", 1020, 885, "18"], ["A", 441, 1120, "3127"], ["A", 6, 285, "22"], ["D", 393, 87, "20"], ["D", 719, 325, "307"], ["D", 195, 643, "308"],
  ["D", 401, 762, "1"], ["D", 525, 1027, "182"], ["D", 63, 1080, "311"], ["D", 451, 1097, "316"], ["D", 468, 1192, "660"], ["E", 396, 98, "48"], ["E", 638, 198, "541"],
  ["E", 818, 322, "3017"], ["E", 1119, 322, "3137"], ["E", 1067, 66, "46"], ["B", 1171, 1157, "47"], ["E", 675, 548, "45"], ["E", 723, 631, "3134"],
  ["E", 989, 535, "23"], ["E", 714, 928, "3257"], ["C", 658, 101, "604"], ["F", 79, 300, "46"], ["F", 196, 585, "300"],
];

const usRoutes = [
  ["A", 286, 677, "61"], ["A", 1190, 900, "61"], ["B", 572, 1178, "90"], ["C", 363, 168, "190"], ["C", 200, 635, "90"], ["D", 854, 752, "90"], ["C", 1078, 0, "607"],
];

const interstates = [
  ["A", 1198, 398, "55"], ["A", 558, 625, "10"], ["B", 168, 1025, "10"], ["B", 772, 1070, "610"], ["B", 865, 1098, "10"], ["B", 1265, 770, "10"],
  ["B", 1451, 522, "10"], ["D", 1406, 70, "310"], ["C", 483, 8, "59"],
];

const Town = ({ at, size = 16.4, color = "#5a5c60" }) => {
  const [sheet, x, y, end, name] = at;
  const [px, py] = place(sheet, x, y);
  const width = (end - x) * sheets[sheet][2];
  return (
    <text x={px} y={py} fontSize={size} fill={color} stroke="#fff" strokeWidth="3.4" strokeLinejoin="round" strokeOpacity=".85"
      paintOrder="stroke" textLength={width} lengthAdjust="spacingAndGlyphs">{name}</text>
  );
};

const ShieldText = ({ children, fill = "#55575a", y = 4.6, bold }) => (
  <text y={y} textAnchor="middle" fontSize="12.8" fontWeight={bold ? 700 : 500} fill={fill}>{children}</text>
);

const StateShield = ({ at: [s, x, y, n] }) => {
  const w = { 1: 22, 2: 22, 3: 27.5, 4: 34.5 }[n.length];
  return (
    <g transform={`translate(${place(s, x, y)})`}>
      <rect x={-w / 2} y="-9" width={w} height="18" rx="9" fill="#fff" stroke="#6d6f72" strokeWidth="1.6" />
      <ShieldText>{n}</ShieldText>
    </g>
  );
};

const UsShield = ({ at: [s, x, y, n] }) => (
  <g transform={`translate(${place(s, x, y)})`}>
    <path transform={n.length > 2 ? "scale(1.1 1)" : undefined}
      d="M-9-11.5Q-5-9 0-11.5Q5-9 9-11.5L12-8Q9.500-4 12 1Q13 8 7 9Q3 9 0 11.500Q-3 9-7 9Q-13 8-12 1Q-9.500-4-12-8Z"
      fill="#fff" stroke="#6d6f72" strokeWidth="1.6" strokeLinejoin="round" />
    <ShieldText>{n}</ShieldText>
  </g>
);

const Interstate = ({ at: [s, x, y, n] }) => (
  <g transform={`translate(${place(s, x, y)})`}>
    <g transform={n.length > 2 ? "scale(1.33 1)" : undefined}>
      <path d="M-9-11.500Q-4.500-9 0-11.500Q4.500-9 9-11.500L10.500-6.500H-10.500Z" fill="#d9504c" />
      <path d="M-10.500-6H10.500Q11.500 6.500 0 11Q-11.500 6.500-10.500-6Z" fill="#3273c4" />
      <path d="M-10.500-6.200H10.500" stroke="#fff" strokeWidth="1.2" />
    </g>
    <ShieldText fill="#fff" bold>{n}</ShieldText>
  </g>
);

const Pin = ({ sheet, x, y }) => (
  <g transform={`translate(${place(sheet, x, y)})`}>
    <path d="M0 26C-1.500 14-11.200 10-11.200 0A11.200 11.200 0 0 1 11.200 0C11.200 10 1.500 14 0 26Z" fill="#698bfb" stroke="#3c54a4" strokeWidth="1.2" />
    <circle r="4.700" fill="#000" />
  </g>
);

const Terrain = () => (
  <MapArt viewBox="0 0 1526 776">
    <defs>
      <filter id="marsh" x="0" y="0" width="100%" height="100%" colorInterpolationFilters="sRGB">
        <feTurbulence type="fractalNoise" baseFrequency=".055 .075" numOctaves="4" seed="8" />
        <feColorMatrix values="0 0 0 0 .667 0 0 0 0 .855 0 0 0 0 1 22 0 0 0 -11.3" />
        <feComposite in2="SourceGraphic" operator="in" />
      </filter>
      <filter id="marshFine" x="0" y="0" width="100%" height="100%" colorInterpolationFilters="sRGB">
        <feTurbulence type="fractalNoise" baseFrequency=".08 .1" numOctaves="3" seed="3" />
        <feColorMatrix values="0 0 0 0 .667 0 0 0 0 .855 0 0 0 0 1 22 0 0 0 -12.6" />
        <feComposite in2="SourceGraphic" operator="in" />
      </filter>
      <filter id="ragged" x="-5%" y="-5%" width="110%" height="110%">
        <feTurbulence type="fractalNoise" baseFrequency=".06" numOctaves="3" seed="5" />
        <feDisplacementMap in="SourceGraphic" scale="16" xChannelSelector="R" yChannelSelector="G" />
      </filter>
      <filter id="rough" x="-2%" y="-2%" width="104%" height="104%">
        <feTurbulence type="fractalNoise" baseFrequency=".05" numOctaves="2" seed="11" />
        <feDisplacementMap in="SourceGraphic" scale="9" xChannelSelector="R" yChannelSelector="G" />
      </filter>
    </defs>
    <rect width="1526" height="776" fill="#f2efe9" />
    <Area shapes={green} fill="#ceedd0" filter="url(#rough)" />
    <Area shapes={deepGreen} fill="#c5e8c9" />
    <Area shapes={farmland} fill="#f0eee8" filter="url(#rough)" />
    <Area shapes={urban} fill="#e8e8e8" />
    <Area shapes={lakes} fill="#aadaff" />
    <Area shapes={outerLand} fill="#f2efe9" filter="url(#ragged)" />
    <Area shapes={reserve} fill="#cdeaca" />
    <Area shapes={marsh} filter="url(#marsh)" />
    <Area shapes={marshFine} filter="url(#marshFine)" />
    <Lines shapes={creeks} stroke="#aadaff" strokeWidth="1.7" />
    <Lines shapes={["A 20 930 35 1040 80 1095"]} stroke="#aadaff" strokeWidth="9" />
    <Lines shapes={["F 0 95 60 155 260 280 400 350", "F 560 400 700 510 1000 760 1200 920", "E 780 200 830 350 850 430"]} stroke="#aadaff" strokeWidth="4" />
    <path d={curve(river)} fill="none" stroke="#fff" strokeOpacity=".7" strokeWidth="13" />
    <path d={curve(river)} fill="none" stroke="#aadaff" strokeWidth="9" />
    <Lines shapes={streets} stroke="#fff" strokeWidth="1.9" />
    <Lines shapes={grid} stroke="#fff" strokeWidth="1.7" />
    <Lines shapes={["C 560 22 590 100 600 160 630 200 625 260 690 320 760 415 850 365 880 400 940 495 1080 470 1200 430 1520 425"]} stroke="#96a9b8" strokeWidth="1.3" strokeDasharray="3 3" />
    <Lines shapes={roads} stroke="#f6cd71" strokeWidth="4.400" />
    <Lines shapes={dualRoads} stroke="#f6cd71" strokeWidth="5.800" />
    <Lines shapes={roads} stroke="#ffe08a" strokeWidth="2.600" />
    <Lines shapes={dualRoads} stroke="#ffe391" strokeWidth="3.600" />

    <g fill="#5b86c6" fontSize="17">
      <path id="maurepas" d={curve("A 915 343 1062 220 1083 18")} fill="none" />
      <text><textPath href="#maurepas" textLength="121">Lake Maurepas</textPath></text>
      <path id="pontchartrain" d={curve("B 610 430 770 500 1062 410")} fill="none" />
      <text><textPath href="#pontchartrain" textLength="150">Lake Pontchartrain</textPath></text>
      <path id="salvador" d={outline(["E 218 965 425 690"])} fill="none" />
      <text><textPath href="#salvador" textLength="112">Lake Salvador</textPath></text>
      <path id="borgne" d={outline(["C 503 1022 710 866"])} fill="none" />
      <text fontSize="15"><textPath href="#borgne" textLength="83">Lake Borgne</textPath></text>
      <path id="black" d={outline(["F 828 1166 940 1270"])} fill="none" />
      <text><textPath href="#black">Black Bay</textPath></text>
    </g>

    {interstates.map((r, i) => <Interstate key={i} at={r} />)}
    {usRoutes.map((r, i) => <UsShield key={i} at={r} />)}
    {stateRoutes.map((r, i) => <StateShield key={i} at={r} />)}
    {towns.map((t, i) => <Town key={i} at={t} />)}
    <Town at={["B", 462, 1124, 668, "Metairie"]} size={18.6} color="#434548" />
    <Town at={["E", 630, 67, 988, "New Orleans"]} size={19.8} color="#35373a" />
    <Pin sheet="B" x={763} y={1020} />
    <Pin sheet="E" x={750} y={530} />
    <Pin sheet="B" x={1545} y={-30} />
  </MapArt>
);

export default function App() {
  return (
    <>
      <GlobalStyle />
      <Stage>
        <Shot>
          <Page>
            <Container>
              <LogoRow>
                <LogoArt viewBox="0 30 1350 495">
                  <path d="M75 497Q80 485 142 468V404H95L80 396L86 388L80 382L102 350L87 346L106 332L94 318L112 308L119 288L110 284L122 276L118 264L108 262L128 248L124 242L132 236L126 232Q134 205 150 180Q160 160 171 159Q172 190 190 220L194 236L202 248L198 252L214 264L206 268L210 280L204 284L214 302L206 306L226 322L218 326L240 346L234 357L214 354L226 378L222 384L228 392L216 404H168V459Q400 412 750 407Q930 408 1098 441V402H1062L1054 392L1062 384L1056 380L1064 364L1044 360L1062 340L1056 336L1072 322L1064 318L1076 302L1068 298L1080 288L1070 286Q1084 240 1094 216Q1100 208 1106 216Q1120 240 1130 270L1126 276L1138 292L1130 294L1138 308L1134 312L1152 326L1146 332L1164 350L1156 364L1166 384L1162 398L1156 402H1117V445Q1170 454 1220 474V444H1190L1184 432L1190 426L1188 416L1176 410L1190 394L1184 390L1196 378L1190 374L1202 362L1192 358L1206 348L1198 346Q1206 310 1218 288H1228Q1242 308 1246 338L1242 342L1258 354L1250 358L1260 372L1252 376L1266 388L1260 394L1276 404L1270 412L1278 430L1274 442H1238V478Q1270 488 1284 500Q1284 510 1274 509Q1060 448 800 447Q400 445 85 503Q77 505 75 497Z" />
                  <path d="M219 427L325 284Q335 268 358 271L402 284L558 76Q570 62 586 74L688 200Q720 148 750 124Q762 112 776 126Q830 190 899 292L924 264Q935 253 948 266L1063 426L942 310L914 324L978 419L965 416L778 193L719 240L850 409H832L602 154Q520 215 448 302Q485 322 491 342Q486 346 460 344L356 325Z" />
                </LogoArt>
              </LogoRow>
              <Navbar>
                <Brand>Trailr</Brand>
                <NavLink $w={122}>My Profile</NavLink>
                <NavLink $w={118}>Stargazer</NavLink>
                <NavLink $w={90}>Signout</NavLink>
              </Navbar>
              <SearchGroup>
                <SearchButton>Find Trails</SearchButton>
                <SearchInput placeholder="Search by Location" />
              </SearchGroup>
              <Modes>
                <ModeName $w={128}>Wanderlust</ModeName>
                <Switch><Knob /></Switch>
                <ModeName $w={120}>Gallivanter</ModeName>
              </Modes>
              <Forecast>
                {days.map((day) => {
                  const Icon = icons[day.icon];
                  return (
                    <DayCard key={day.name}>
                      <DayName>{day.name}</DayName>
                      <IconBox><Icon /></IconBox>
                      <Temp $high>{day.high}°F</Temp>
                      <Temp>{day.low}°F</Temp>
                    </DayCard>
                  );
                })}
              </Forecast>
              <MapFrame>
                <Terrain />
                <Control $top={14}>
                  <MapButton aria-label="Toggle fullscreen view">
                    <svg width="25" height="25" viewBox="0 0 25 25" fill="none" stroke="#666" strokeWidth="3.200">
                      <path d="M1.600 8.500V1.600H8.500M16.500 1.600H23.400V8.500M23.400 16.500V23.400H16.500M8.500 23.400H1.600V16.500" />
                    </svg>
                  </MapButton>
                </Control>
                <Control $top={681}>
                  <MapButton aria-label="Zoom in">
                    <svg width="25" height="25" viewBox="0 0 25 25" stroke="#666" strokeWidth="5">
                      <path d="M0 12.500H25M12.500 0V25" />
                    </svg>
                  </MapButton>
                  <Divider />
                  <MapButton aria-label="Zoom out">
                    <svg width="25" height="25" viewBox="0 0 25 25" stroke="#666" strokeWidth="5">
                      <path d="M0 12.500H25" />
                    </svg>
                  </MapButton>
                </Control>
              </MapFrame>
            </Container>
          </Page>
        </Shot>
      </Stage>
    </>
  );
}
